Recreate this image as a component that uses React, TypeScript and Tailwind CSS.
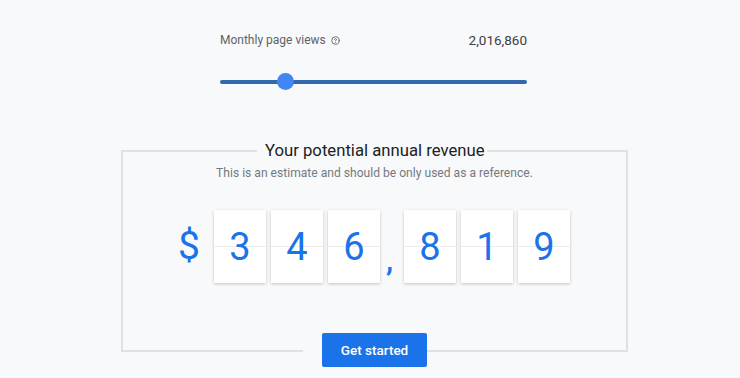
import React from "react";

const Card = ({ d }: { d: string }) => (
  <div className="relative w-[52px] h-[73px] bg-white shadow-[0_1px_3px_rgba(0,0,0,0.22)] flex items-center justify-center">
    <div className="absolute left-0 right-0 top-[36px] h-px bg-[#ececec]" />
    <span className="relative text-[38px] leading-none text-[#1a73e8]">{d}</span>
  </div>
);

export default function App() {
  return (
    <div className="w-[740px] h-[378px] bg-[#f8f9fa] overflow-hidden font-['Roboto',_'Liberation_Sans',_sans-serif]">
      <div className="ml-[220px] w-[307px] pt-[31px]">
        <div className="flex justify-between items-center h-[18px]">
          <div className="flex items-center gap-[5px] text-[12px] text-[#5f6368]">
            <span>Monthly page views</span>
            <svg width="9" height="9" viewBox="0 0 24 24" fill="none" stroke="#5f6368" strokeWidth="2.4" strokeLinecap="round" strokeLinejoin="round">
              <circle cx="12" cy="12" r="10" />
              <path d="M9.1 9a3 3 0 0 1 5.8 1c0 2-3 3-3 3" />
              <path d="M12 17h.01" />
            </svg>
          </div>
          <span className="text-[13.5px] text-[#3c4043]">2,016,860</span>
        </div>
        <div className="relative mt-[24px] h-[17px] flex items-center">
          <div className="w-full h-[4px] rounded-full bg-[#3268ad]" />
          <div className="absolute left-[57px] top-0 w-[17px] h-[17px] rounded-full bg-[#4285f4]" />
        </div>
      </div>

      <fieldset className="ml-[121px] w-[507px] mt-[50px] border-2 border-[#dfe1e4] min-w-0">
        <legend className="ml-[134px] pl-[8px] pr-[2px] text-[16.7px] leading-[22px] text-[#202124]">
          Your potential annual revenue
        </legend>
        <div className="mt-[3px] text-center text-[12.1px] leading-[16px] text-[#757a80]">
          This is an estimate and should be only used as a reference.
        </div>
        <div className="mt-[29px] ml-[55px] flex items-center">
          <span className="text-[39px] leading-none text-[#1a73e8] w-[36px]">$</span>
          <div className="flex gap-[5px]">
            <Card d="3" />
            <Card d="4" />
            <Card d="6" />
          </div>
          <div className="w-[24px] h-[73px] flex items-end justify-start pl-[6px] pb-[13px]">
            <span className="text-[32px] leading-[20px] text-[#1a73e8] font-medium">,</span>
          </div>
          <div className="flex gap-[5px]">
            <Card d="8" />
            <Card d="1" />
            <Card d="9" />
          </div>
        </div>
        <div className="h-[67px]" />
      </fieldset>
      <div className="-mt-[19px] ml-[303px] w-[124px] flex justify-end bg-[#f8f9fa] relative">
        <button className="w-[105px] h-[34px] bg-[#1a73e8] text-white text-[13.5px] font-medium rounded-[2px]">
          Get started
        </button>
      </div>
    </div>
  );
}
